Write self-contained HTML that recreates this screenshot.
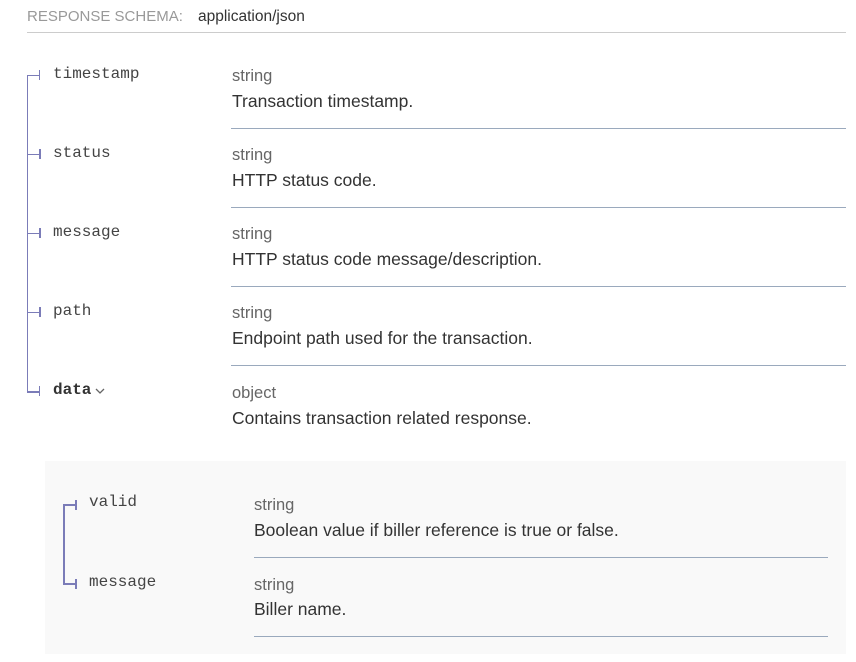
<!DOCTYPE html>
<html><head><style>
body{margin:0;background:#fff;font-family:"Liberation Sans",Arial,sans-serif;width:856px;height:662px;position:relative;overflow:hidden}
.a{position:absolute;white-space:nowrap}
.hdr{left:27px;top:8px;font-size:15px;color:#999}
.ct{left:198px;top:8px;font-size:15.5px;color:#333}
.hl{left:27px;top:32px;width:819px;height:1px;background:#ccc}
.nm{font-family:"Liberation Mono",monospace;font-size:16px;color:#444}
.ty{font-size:16.5px;color:#666}
.ds{font-size:17.5px;color:#333}
.dv{height:1px;background:#9aa9bd}
.ln{background:#7b7cb8}
</style></head><body>
<div class="a hdr">RESPONSE SCHEMA:</div>
<div class="a ct">application/json</div>
<div class="a hl"></div>

<div class="a ln" style="left:27px;top:75px;width:1px;height:317px"></div>
<div class="a ln" style="left:27px;top:75px;width:12px;height:1px"></div>
<div class="a ln" style="left:39px;top:70px;width:1px;height:10px"></div>
<div class="a ln" style="left:27px;top:154px;width:12px;height:1px"></div>
<div class="a ln" style="left:39px;top:149px;width:2px;height:10px"></div>
<div class="a ln" style="left:27px;top:233px;width:12px;height:1px"></div>
<div class="a ln" style="left:39px;top:228px;width:2px;height:10px"></div>
<div class="a ln" style="left:27px;top:312px;width:12px;height:1px"></div>
<div class="a ln" style="left:39px;top:307px;width:2px;height:10px"></div>
<div class="a ln" style="left:27px;top:391px;width:12px;height:2px"></div>
<div class="a ln" style="left:39px;top:386px;width:1px;height:10px"></div>

<div class="a nm" style="left:53px;top:65px">timestamp</div>
<div class="a ty" style="left:232px;top:67px">string</div>
<div class="a ds" style="left:232px;top:91px">Transaction timestamp.</div>
<div class="a dv" style="left:231px;top:128px;width:615px"></div>

<div class="a nm" style="left:53px;top:144px">status</div>
<div class="a ty" style="left:232px;top:146px">string</div>
<div class="a ds" style="left:232px;top:170px">HTTP status code.</div>
<div class="a dv" style="left:231px;top:207px;width:615px"></div>

<div class="a nm" style="left:53px;top:223px">message</div>
<div class="a ty" style="left:232px;top:225px">string</div>
<div class="a ds" style="left:232px;top:249px">HTTP status code message/description.</div>
<div class="a dv" style="left:231px;top:286px;width:615px"></div>

<div class="a nm" style="left:53px;top:302px">path</div>
<div class="a ty" style="left:232px;top:304px">string</div>
<div class="a ds" style="left:232px;top:328px">Endpoint path used for the transaction.</div>
<div class="a dv" style="left:231px;top:365px;width:615px"></div>

<div class="a nm" style="left:53px;top:381px;font-weight:bold;color:#333">data</div>
<svg class="a" style="left:95px;top:387px" width="12" height="8"><path d="M1 2 L5 6 L9 2" fill="none" stroke="#666" stroke-width="1.3"/></svg>
<div class="a ty" style="left:232px;top:384px">object</div>
<div class="a ds" style="left:232px;top:408px">Contains transaction related response.</div>

<div class="a" style="left:45px;top:461px;width:801px;height:193px;background:#f9f9f9"></div>
<div class="a ln" style="left:63px;top:504px;width:2px;height:81px"></div>
<div class="a ln" style="left:63px;top:504px;width:13px;height:2px"></div>
<div class="a ln" style="left:75px;top:500px;width:2px;height:10px"></div>
<div class="a ln" style="left:63px;top:583px;width:13px;height:2px"></div>
<div class="a ln" style="left:75px;top:579px;width:2px;height:10px"></div>

<div class="a nm" style="left:89px;top:493px">valid</div>
<div class="a ty" style="left:254px;top:496px">string</div>
<div class="a ds" style="left:254px;top:520px">Boolean value if biller reference is true or false.</div>
<div class="a dv" style="left:254px;top:557px;width:574px"></div>

<div class="a nm" style="left:89px;top:573px">message</div>
<div class="a ty" style="left:254px;top:576px">string</div>
<div class="a ds" style="left:254px;top:599px">Biller name.</div>
<div class="a dv" style="left:254px;top:636px;width:574px"></div>
</body></html>
